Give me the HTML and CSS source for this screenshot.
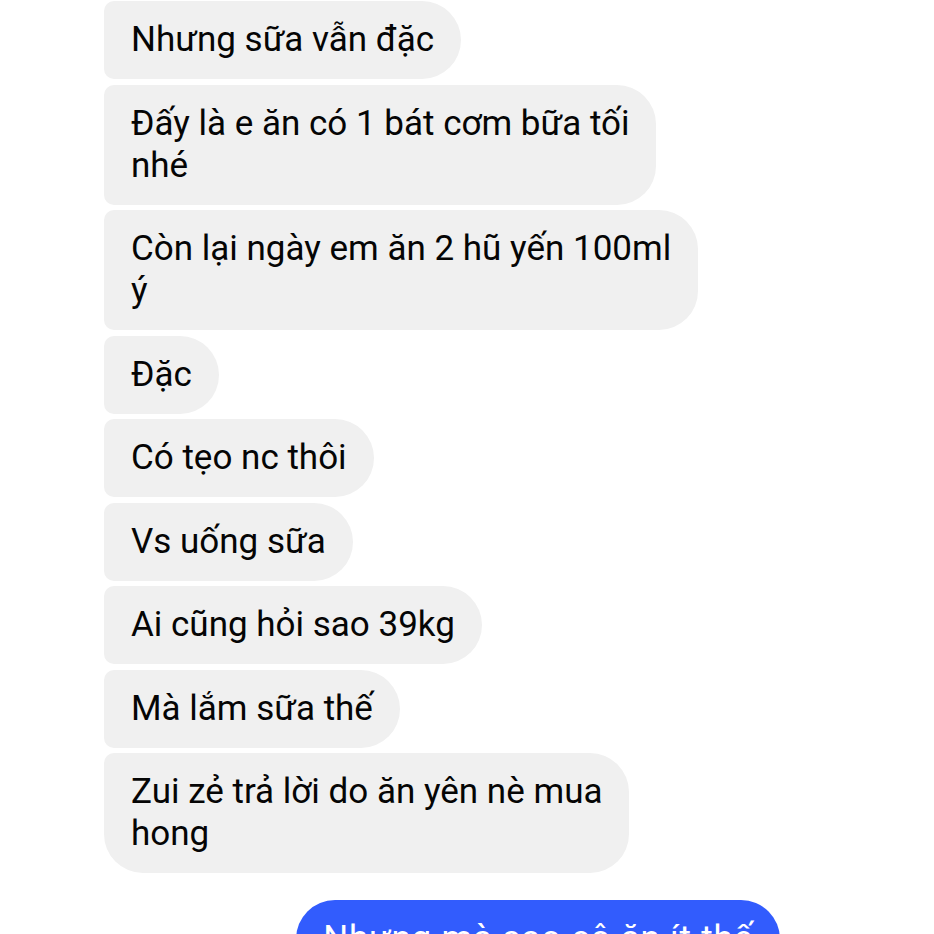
FILE: index.html
```html
<!DOCTYPE html>
<html lang="vi">
<head>
  <meta charset="UTF-8">
  <meta name="viewport" content="width=device-width, initial-scale=1.0">
  <title>Tin nhắn</title>
  <link rel="stylesheet" href="styles.css">
</head>
<body>
  <div class="chat">
    <!-- Tin nhắn nhận -->
    <div class="nhom">
      <div class="tin">Nhưng sữa vẫn đặc</div>
      <div class="tin">Đấy là e ăn có 1 bát cơm bữa tối<br>nhé</div>
      <div class="tin">Còn lại ngày em ăn 2 hũ yến 100ml<br>ý</div>
      <div class="tin">Đặc</div>
      <div class="tin">Có tẹo nc thôi</div>
      <div class="tin">Vs uống sữa</div>
      <div class="tin">Ai cũng hỏi sao 39kg</div>
      <div class="tin">Mà lắm sữa thế</div>
      <div class="tin cuoi">Zui zẻ trả lời do ăn yên nè mua<br>hong</div>
    </div>

    <!-- Tin nhắn gửi -->
    <div class="nhom gui">
      <div class="tin xanh">Nhưng mà sao cô ăn ít thế</div>
    </div>
  </div>
</body>
</html>
```

FILE: styles.css
```css
body {
  margin: 0;
  padding: 0;
  background-color: #ffffff;
  font-family: Roboto, "Noto Sans", Arial, sans-serif;
  color: #050505;
}

.chat {
  display: flex;
  flex-direction: column;
  gap: 27px;
  padding: 1px 0 0 104px;
}

.nhom {
  display: flex;
  flex-direction: column;
  align-items: flex-start;
  gap: 5.5px;
}

.tin {
  background-color: #f0f0f0;
  font-size: 35px;
  line-height: 42px;
  padding: 18px 27px;
  white-space: nowrap;
  border-radius: 10px 39px 39px 10px;
}

.tin.cuoi {
  border-bottom-left-radius: 39px;
}

.gui {
  align-items: flex-end;
  padding-right: 154px;
}

.tin.xanh {
  background-color: #325cfd;
  color: #ffffff;
  letter-spacing: 0.8px;
  border-radius: 39px 39px 10px 39px;
}
```
